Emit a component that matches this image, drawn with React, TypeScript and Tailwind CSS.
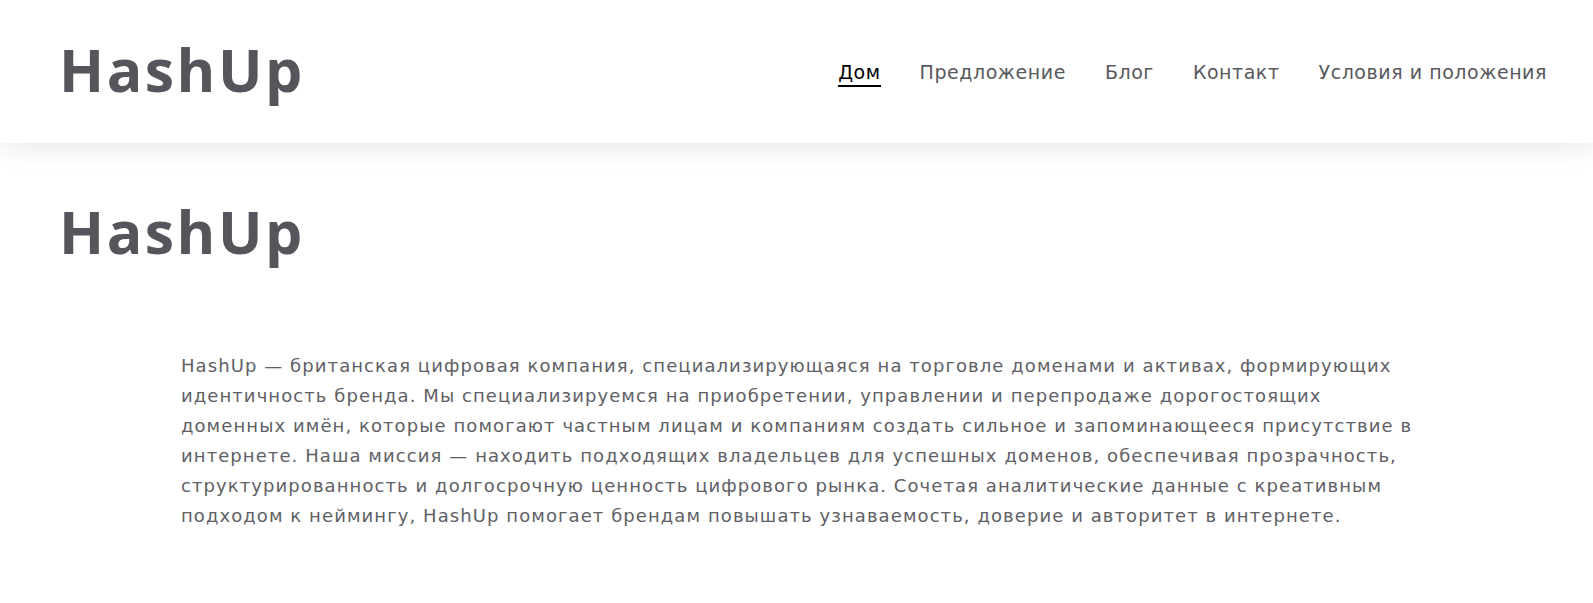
import React from "react";

const lines = [
  "HashUp — британская цифровая компания, специализирующаяся на торговле доменами и активах, формирующих",
  "идентичность бренда. Мы специализируемся на приобретении, управлении и перепродаже дорогостоящих",
  "доменных имён, которые помогают частным лицам и компаниям создать сильное и запоминающееся присутствие в",
  "интернете. Наша миссия — находить подходящих владельцев для успешных доменов, обеспечивая прозрачность,",
  "структурированность и долгосрочную ценность цифрового рынка. Сочетая аналитические данные с креативным",
  "подходом к неймингу, HashUp помогает брендам повышать узнаваемость, доверие и авторитет в интернете.",
];

const nav = ["Дом", "Предложение", "Блог", "Контакт", "Условия и положения"];

export default function App() {
  return (
    <div className="min-h-[603px] bg-white font-['Open_Sans',sans-serif]">
      <header className="relative z-10 flex h-[143px] items-center justify-between bg-white pl-[59px] pr-[46px] shadow-[0_2px_28px_rgba(0,0,0,0.11)]">
        <div className="mt-[-4px] text-[59px] font-bold leading-none tracking-[2.5px] text-[#55555b]">HashUp</div>
        <nav className="flex items-center gap-[39px] pt-[1px] font-['DejaVu_Sans',sans-serif] text-[19px] leading-[24px] tracking-[0.55px] text-[#58585d]">
          {nav.map((n, i) => (
            <a
              key={n}
              className={
                i === 0
                  ? "relative text-black after:absolute after:left-0 after:right-0 after:bottom-[-3px] after:h-[2px] after:bg-black after:content-['']"
                  : ""
              }
            >
              {n}
            </a>
          ))}
        </nav>
      </header>
      <main className="px-[59px] pt-[48px]">
        <h1 className="text-[59px] font-bold leading-[80px] tracking-[2.5px] text-[#55555b]">HashUp</h1>
        <div className="mx-auto mt-[80px] w-[1231px] font-['DejaVu_Sans',sans-serif] text-[18px] leading-[30px] tracking-[1.08px] text-[#606065]">
          {lines.map((l) => (
            <span key={l} className="block whitespace-nowrap">
              {l}
            </span>
          ))}
        </div>
      </main>
    </div>
  );
}
